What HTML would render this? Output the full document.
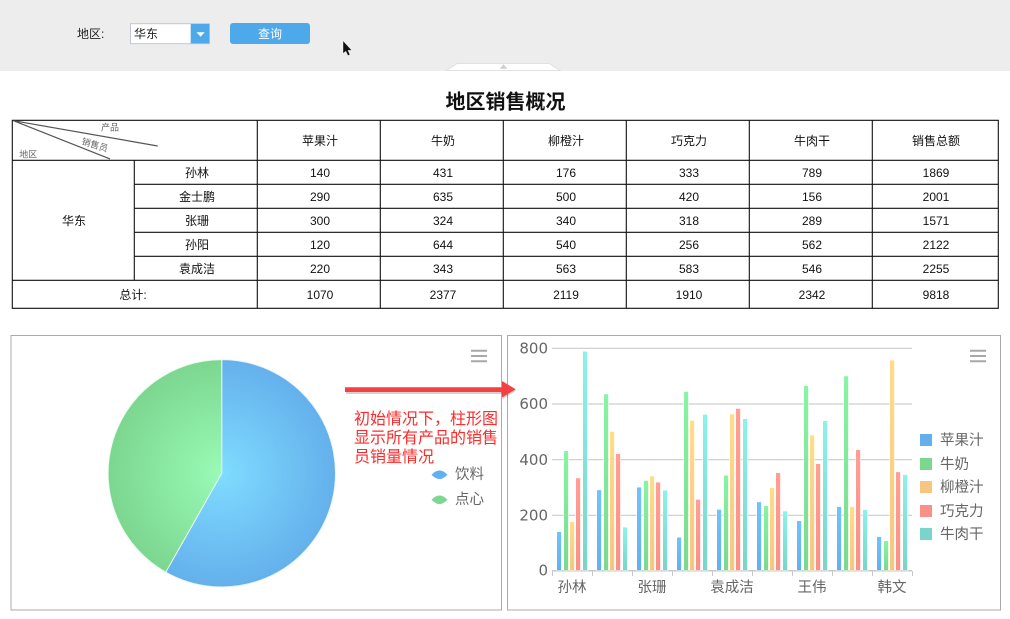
<!DOCTYPE html>
<html>
<head>
<meta charset="utf-8">
<style>
html,body{margin:0;padding:0;background:#fff;width:1010px;height:619px;overflow:hidden}
svg{display:block;font-family:"Liberation Sans","Noto Sans CJK SC",sans-serif}
.c{font-size:12px;fill:#111;text-anchor:middle}
.l{stroke:#111;stroke-width:1.1;fill:none}
.ax{font-family:"DejaVu Sans","Noto Sans CJK SC",sans-serif;font-size:15px;fill:#666;text-anchor:end}
.xl{font-size:14.5px;fill:#666;text-anchor:middle}
.lg{font-size:14.5px;fill:#666}
.r{font-size:16px;fill:#ff2a2a}
.b rect{stroke:#fff;stroke-width:.6;vector-effect:non-scaling-stroke}
.b1{fill:url(#gb)}.b2{fill:url(#gg)}.b3{fill:url(#go)}.b4{fill:url(#gr)}.b5{fill:url(#gt)}
</style>
</head>
<body>
<svg width="1010" height="619" viewBox="0 0 1010 619" xmlns="http://www.w3.org/2000/svg">
<defs>
<linearGradient id="gb" x1="0" y1="0" x2="0" y2="1"><stop offset="0" stop-color="#64b0ee"/><stop offset="1" stop-color="#70c2ff"/></linearGradient>
<linearGradient id="gg" x1="0" y1="0" x2="0" y2="1"><stop offset="0" stop-color="#7cd890"/><stop offset="1" stop-color="#88f4a4"/></linearGradient>
<linearGradient id="go" x1="0" y1="0" x2="0" y2="1"><stop offset="0" stop-color="#f7c57f"/><stop offset="1" stop-color="#ffdd8b"/></linearGradient>
<linearGradient id="gr" x1="0" y1="0" x2="0" y2="1"><stop offset="0" stop-color="#fa9087"/><stop offset="1" stop-color="#ff9f94"/></linearGradient>
<linearGradient id="gt" x1="0" y1="0" x2="0" y2="1"><stop offset="0" stop-color="#79d5c9"/><stop offset="1" stop-color="#8bf3e8"/></linearGradient>
<radialGradient id="pb" gradientUnits="userSpaceOnUse" cx="221.7" cy="473.3" r="114"><stop offset="0" stop-color="#7fdcff"/><stop offset="1" stop-color="#64b0ec"/></radialGradient>
<radialGradient id="pg" gradientUnits="userSpaceOnUse" cx="221.7" cy="473.3" r="114"><stop offset="0" stop-color="#98fbb6"/><stop offset="1" stop-color="#7cd68f"/></radialGradient>
</defs>

<!-- top bar -->
<rect x="0" y="0" width="1010" height="71" fill="#ededed"/>
<path d="M446.5 70.5L457 63.5H549L560 70.5Z" fill="#fff" stroke="#e0e0e0" stroke-width="1"/>
<path d="M499.7 68.7L503.5 64.2L507.3 68.7Z" fill="#cfcfcf"/>
<text x="77" y="38" font-size="12" fill="#222">地区:</text>
<rect x="130.5" y="23.7" width="79" height="20" fill="#fff" stroke="#c2c6d2"/>
<rect x="190.7" y="24" width="18.6" height="19.4" fill="#4da9ea"/>
<path d="M196.5 32.2H204.7L200.6 36.8Z" fill="#fff"/>
<text x="134" y="38" font-size="12" fill="#222">华东</text>
<rect x="230" y="23" width="80" height="21" rx="3" fill="#4da9ea"/>
<text x="270" y="38" font-size="12" fill="#fff" text-anchor="middle">查询</text>
<!-- cursor -->
<path d="M343 40.7V53.5L345.8 51.2L347.9 55.6L350 54.7L348 50.4H351.8Z" fill="#111" stroke="#fff" stroke-width=".4"/>

<text x="505.5" y="108.5" font-size="20" font-weight="bold" fill="#111" text-anchor="middle">地区销售概况</text>

<!-- table grid -->
<g transform="translate(-.2,-.2)">
<path class="l" d="M12.5 120.5H998.5V308.5H12.5ZM12.5 160.5H998.5M134.5 184.5H998.5M134.5 208.5H998.5M134.5 232.5H998.5M134.5 256.5H998.5M12.5 280.5H998.5M134.5 160.5V280.5M257.5 120.5V308.5M380.5 120.5V308.5M503.5 120.5V308.5M626.5 120.5V308.5M749.5 120.5V308.5M872.5 120.5V308.5"/>
</g>
<path d="M13.5 120.7L157.7 146M13.5 120.7L110 158.9" stroke="#555" stroke-width="1.2" fill="none"/>
<text x="101" y="130.5" font-size="9" fill="#666">产品</text>
<text x="81" y="144" font-size="9" fill="#666" transform="rotate(17 81 144)">销售员</text>
<text x="19.3" y="157.5" font-size="9" fill="#666">地区</text>

<text class="c" x="320" y="145">苹果汁</text><text class="c" x="443" y="145">牛奶</text><text class="c" x="566" y="145">柳橙汁</text><text class="c" x="689" y="145">巧克力</text><text class="c" x="812" y="145">牛肉干</text><text class="c" x="936" y="145">销售总额</text>
<text class="c" x="74" y="225">华东</text>

<text class="c" x="197" y="177">孙林</text><text class="c" x="320" y="177">140</text><text class="c" x="443" y="177">431</text><text class="c" x="566" y="177">176</text><text class="c" x="689" y="177">333</text><text class="c" x="812" y="177">789</text><text class="c" x="936" y="177">1869</text>
<text class="c" x="197" y="201">金士鹏</text><text class="c" x="320" y="201">290</text><text class="c" x="443" y="201">635</text><text class="c" x="566" y="201">500</text><text class="c" x="689" y="201">420</text><text class="c" x="812" y="201">156</text><text class="c" x="936" y="201">2001</text>
<text class="c" x="197" y="225">张珊</text><text class="c" x="320" y="225">300</text><text class="c" x="443" y="225">324</text><text class="c" x="566" y="225">340</text><text class="c" x="689" y="225">318</text><text class="c" x="812" y="225">289</text><text class="c" x="936" y="225">1571</text>
<text class="c" x="197" y="249">孙阳</text><text class="c" x="320" y="249">120</text><text class="c" x="443" y="249">644</text><text class="c" x="566" y="249">540</text><text class="c" x="689" y="249">256</text><text class="c" x="812" y="249">562</text><text class="c" x="936" y="249">2122</text>
<text class="c" x="197" y="273">袁成洁</text><text class="c" x="320" y="273">220</text><text class="c" x="443" y="273">343</text><text class="c" x="566" y="273">563</text><text class="c" x="689" y="273">583</text><text class="c" x="812" y="273">546</text><text class="c" x="936" y="273">2255</text>
<text class="c" x="133" y="299">总计:</text><text class="c" x="320" y="299">1070</text><text class="c" x="443" y="299">2377</text><text class="c" x="566" y="299">2119</text><text class="c" x="689" y="299">1910</text><text class="c" x="812" y="299">2342</text><text class="c" x="936" y="299">9818</text>

<!-- panels -->
<rect x="11" y="335.5" width="490.5" height="274.5" fill="#fff" stroke="#ababab" stroke-width="1"/>
<rect x="507.5" y="335.5" width="493" height="274.5" fill="#fff" stroke="#ababab" stroke-width="1"/>

<!-- menu icons -->
<path d="M471 350.7H487M471 356H487M471 361.3H487" stroke="#a8a8a8" stroke-width="2"/>
<path d="M970 350.7H986M970 356H986M970 361.3H986" stroke="#a8a8a8" stroke-width="2"/>

<!-- pie -->
<path d="M221.7 473.3V359.6A113.7 113.7 0 1 1 165.7 572.2Z" fill="url(#pb)" stroke="#e8f6ff" stroke-width="1"/>
<path d="M221.7 473.3L165.7 572.2A113.7 113.7 0 0 1 221.7 359.6Z" fill="url(#pg)" stroke="#e8fff0" stroke-width="1"/>

<!-- pie legend -->
<path d="M431.5 474.7C435 471.4 437 470.5 439.5 470.5C442 470.5 444 471.4 447.5 474.7C444 478 442 479 439.5 479C437 479 435 478 431.5 474.7Z" fill="#64b0ee"/>
<path d="M431.5 499.7C435 496.4 437 495.5 439.5 495.5C442 495.5 444 496.4 447.5 499.7C444 503 442 504 439.5 504C437 504 435 503 431.5 499.7Z" fill="#7cd890"/>
<text class="lg" x="455" y="479">饮料</text>
<text class="lg" x="455" y="504">点心</text>

<!-- arrow -->
<path d="M346 387.5H503V381L516 389L503 397.5V392.5H346Z" fill="#000" opacity=".18" transform="translate(0,1.5)"/>
<path d="M345 387.2H502V381L515.7 389.3L502 397.5V392H345Z" fill="#f44040"/>

<!-- annotation -->
<text class="r" x="354" y="424">初始情况下&#xFF0C;柱形图</text>
<text class="r" x="354" y="443">显示所有产品的销售</text>
<text class="r" x="354" y="462">员销量情况</text>

<!-- bar chart axes -->
<path d="M552 348.3H912M552 404H912M552 459.7H912M552 515.3H912" stroke="#cdcdcd" stroke-width="1.2"/>
<path d="M552 570.8H912" stroke="#b8b8b8" stroke-width="1.2"/>
<path d="M552.5 571v5M592.5 571v5M632.5 571v5M672.5 571v5M712.5 571v5M752.5 571v5M792.5 571v5M832.5 571v5M872.5 571v5M912.5 571v5" stroke="#c8c8c8" stroke-width="1"/>
<text class="ax" x="548" y="353.5">800</text>
<text class="ax" x="548" y="409">600</text>
<text class="ax" x="548" y="465">400</text>
<text class="ax" x="548" y="520.7">200</text>
<text class="ax" x="548" y="575.5">0</text>
<text class="xl" x="572" y="592">孙林</text>
<text class="xl" x="652" y="592">张珊</text>
<text class="xl" x="732" y="592">袁成洁</text>
<text class="xl" x="812" y="592">王伟</text>
<text class="xl" x="892" y="592">韩文</text>

<!-- bars -->
<g class="b" transform="translate(552.5,570.5) scale(1,-0.278)">
<g><rect class="b1" x="4.2" width="4.8" height="140"/><rect class="b2" x="11.2" width="4.8" height="431"/><rect class="b3" x="17.2" width="4.8" height="176"/><rect class="b4" x="23.2" width="4.8" height="333"/><rect class="b5" x="30.2" width="4.8" height="789"/></g>
<g transform="translate(40,0)"><rect class="b1" x="4.2" width="4.8" height="290"/><rect class="b2" x="11.2" width="4.8" height="635"/><rect class="b3" x="17.2" width="4.8" height="500"/><rect class="b4" x="23.2" width="4.8" height="420"/><rect class="b5" x="30.2" width="4.8" height="156"/></g>
<g transform="translate(80,0)"><rect class="b1" x="4.2" width="4.8" height="300"/><rect class="b2" x="11.2" width="4.8" height="324"/><rect class="b3" x="17.2" width="4.8" height="340"/><rect class="b4" x="23.2" width="4.8" height="318"/><rect class="b5" x="30.2" width="4.8" height="289"/></g>
<g transform="translate(120,0)"><rect class="b1" x="4.2" width="4.8" height="120"/><rect class="b2" x="11.2" width="4.8" height="644"/><rect class="b3" x="17.2" width="4.8" height="540"/><rect class="b4" x="23.2" width="4.8" height="256"/><rect class="b5" x="30.2" width="4.8" height="562"/></g>
<g transform="translate(160,0)"><rect class="b1" x="4.2" width="4.8" height="220"/><rect class="b2" x="11.2" width="4.8" height="343"/><rect class="b3" x="17.2" width="4.8" height="563"/><rect class="b4" x="23.2" width="4.8" height="583"/><rect class="b5" x="30.2" width="4.8" height="546"/></g>
<g transform="translate(200,0)"><rect class="b1" x="4.2" width="4.8" height="247"/><rect class="b2" x="11.2" width="4.8" height="233"/><rect class="b3" x="17.2" width="4.8" height="298"/><rect class="b4" x="23.2" width="4.8" height="352"/><rect class="b5" x="30.2" width="4.8" height="214"/></g>
<g transform="translate(240,0)"><rect class="b1" x="4.2" width="4.8" height="179"/><rect class="b2" x="11.2" width="4.8" height="665"/><rect class="b3" x="17.2" width="4.8" height="487"/><rect class="b4" x="23.2" width="4.8" height="384"/><rect class="b5" x="30.2" width="4.8" height="539"/></g>
<g transform="translate(280,0)"><rect class="b1" x="4.2" width="4.8" height="230"/><rect class="b2" x="11.2" width="4.8" height="700"/><rect class="b3" x="17.2" width="4.8" height="230"/><rect class="b4" x="23.2" width="4.8" height="435"/><rect class="b5" x="30.2" width="4.8" height="219"/></g>
<g transform="translate(320,0)"><rect class="b1" x="4.2" width="4.8" height="122"/><rect class="b2" x="11.2" width="4.8" height="107"/><rect class="b3" x="17.2" width="4.8" height="757"/><rect class="b4" x="23.2" width="4.8" height="355"/><rect class="b5" x="30.2" width="4.8" height="345"/></g>
</g>

<!-- bar legend -->
<rect x="920" y="434" width="12" height="12" fill="#64b0ee"/>
<rect x="920" y="458" width="12" height="12" fill="#7cd890"/>
<rect x="920" y="481" width="12" height="12" fill="#f7c57f"/>
<rect x="920" y="505" width="12" height="12" fill="#fa9087"/>
<rect x="920" y="528" width="12" height="12" fill="#79d5c9"/>
<text class="lg" x="940" y="445">苹果汁</text>
<text class="lg" x="940" y="469">牛奶</text>
<text class="lg" x="940" y="492">柳橙汁</text>
<text class="lg" x="940" y="516">巧克力</text>
<text class="lg" x="940" y="539">牛肉干</text>
</svg>
</body>
</html>
